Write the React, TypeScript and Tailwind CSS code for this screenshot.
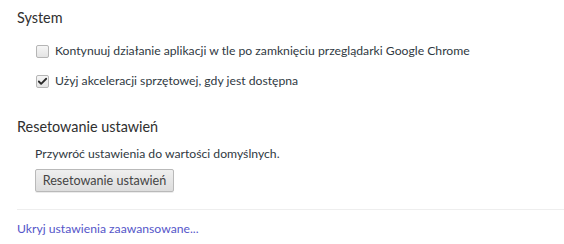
import { Check } from 'lucide-react'

const FONT = "font-['Segoe_UI','Lato','Noto_Sans',sans-serif]"

function Checkbox({ checked }: { checked?: boolean }) {
  return (
    <span className="flex h-[13px] w-[13px] shrink-0 items-center justify-center rounded-[2px] border border-[#b5b5b5] bg-gradient-to-b from-[#f6f6f6] to-[#e4e4e4]">
      {checked && <Check className="h-[11px] w-[11px] text-[#2a2a2a]" strokeWidth={4} />}
    </span>
  )
}

function Option({ label, checked }: { label: string; checked?: boolean }) {
  return (
    <label className="flex items-center gap-[6px]">
      <Checkbox checked={checked} />
      <span>{label}</span>
    </label>
  )
}

export default function App() {
  return (
    <div className={`h-[244px] w-[564px] overflow-hidden bg-white pl-[17px] text-[12.2px] text-[#303942] ${FONT}`}>
      {/* System */}
      <h3 className="pt-[8px] text-[14.4px] leading-[20px] font-normal text-[#303030]">System</h3>
      <div className="mt-[14px] space-y-[12px] pl-[19px] leading-[18px]">
        <Option label="Kontynuuj działanie aplikacji w tle po zamknięciu przeglądarki Google Chrome" />
        <Option label="Użyj akceleracji sprzętowej, gdy jest dostępna" checked />
      </div>

      {/* Reset */}
      <h3 className="mt-[27px] text-[14.4px] leading-[20px] font-normal text-[#303030]">Resetowanie ustawień</h3>
      <div className="mt-[8px] pl-[18px]">
        <p className="leading-[18px]">Przywróć ustawienia do wartości domyślnych.</p>
        <button className="mt-[6px] h-[23px] w-[139px] rounded-[2px] border border-[#b9b9b9] bg-gradient-to-b from-[#efefef] to-[#dddddd] text-[12.6px] leading-[20px] text-[#444] shadow-[0_1px_0_rgba(0,0,0,0.08)]">
          Resetowanie ustawień
        </button>
      </div>

      <div className="mt-[17px] border-t border-[#eeeeee]" />
      <a className="mt-[10px] block leading-[18px] text-[#5556c9]">Ukryj ustawienia zaawansowane...</a>
    </div>
  )
}
